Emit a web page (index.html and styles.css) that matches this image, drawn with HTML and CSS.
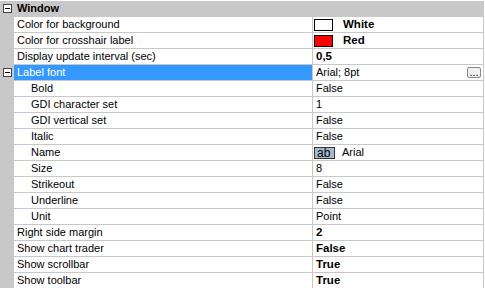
FILE: index.html
```html
<!DOCTYPE html>
<html lang="en">
<head>
    <meta charset="UTF-8">
    <title>Chart Properties</title>
    <link rel="stylesheet" href="styles.css">
</head>
<body>

    <div class="grid">
        <div class="row cat">
            <span class="gut"><i class="tog"></i></span>
            <span class="name">Window</span>
        </div>
        <div class="row">
            <span class="gut"></span>
            <span class="name">Color for background</span>
            <span class="val bold"><i class="swatch white"></i>White</span>
        </div>
        <div class="row">
            <span class="gut"></span>
            <span class="name">Color for crosshair label</span>
            <span class="val bold"><i class="swatch red"></i>Red</span>
        </div>
        <div class="row">
            <span class="gut"></span>
            <span class="name">Display update interval (sec)</span>
            <span class="val bold">0,5</span>
        </div>
        <div class="row">
            <span class="gut"><i class="tog"></i></span>
            <span class="name selected">Label font</span>
            <span class="val">Arial; 8pt<b class="dots">...</b></span>
        </div>
        <div class="row">
            <span class="gut"></span>
            <span class="name sub">Bold</span>
            <span class="val">False</span>
        </div>
        <div class="row">
            <span class="gut"></span>
            <span class="name sub">GDI character set</span>
            <span class="val">1</span>
        </div>
        <div class="row">
            <span class="gut"></span>
            <span class="name sub">GDI vertical set</span>
            <span class="val">False</span>
        </div>
        <div class="row">
            <span class="gut"></span>
            <span class="name sub">Italic</span>
            <span class="val">False</span>
        </div>
        <div class="row">
            <span class="gut"></span>
            <span class="name sub">Name</span>
            <span class="val"><i class="ab">ab</i>Arial</span>
        </div>
        <div class="row">
            <span class="gut"></span>
            <span class="name sub">Size</span>
            <span class="val">8</span>
        </div>
        <div class="row">
            <span class="gut"></span>
            <span class="name sub">Strikeout</span>
            <span class="val">False</span>
        </div>
        <div class="row">
            <span class="gut"></span>
            <span class="name sub">Underline</span>
            <span class="val">False</span>
        </div>
        <div class="row">
            <span class="gut"></span>
            <span class="name sub">Unit</span>
            <span class="val">Point</span>
        </div>
        <div class="row">
            <span class="gut"></span>
            <span class="name">Right side margin</span>
            <span class="val bold">2</span>
        </div>
        <div class="row">
            <span class="gut"></span>
            <span class="name">Show chart trader</span>
            <span class="val bold">False</span>
        </div>
        <div class="row">
            <span class="gut"></span>
            <span class="name">Show scrollbar</span>
            <span class="val bold">True</span>
        </div>
        <div class="row">
            <span class="gut"></span>
            <span class="name">Show toolbar</span>
            <span class="val bold">True</span>
        </div>
    </div>

</body>
</html>
```

FILE: styles.css
```css
body {
    margin: 0;
    padding: 0;
    background-color: #fff;
    font-family: "Liberation Sans", Arial, sans-serif;
    font-size: 11px;
    color: #000;
    overflow: hidden;
}

.grid {
    width: 484px;
    padding-top: 1px;
}

.row {
    display: flex;
    height: 16px;
    line-height: 15px;
}

.gut {
    width: 14px;
    flex: none;
    background-color: #c8c8c8;
    position: relative;
}

/* the little minus box */
.tog {
    position: absolute;
    left: 3px;
    top: 3px;
    width: 7px;
    height: 7px;
    border: 1px solid #444;
    background-color: #fff;
}

.tog::after {
    content: "";
    position: absolute;
    left: 1px;
    top: 3px;
    width: 5px;
    height: 1px;
    background-color: #000;
}

.name {
    width: 295px;
    flex: none;
    padding-left: 3px;
    border-bottom: 1px solid #c8c8c8;
    white-space: nowrap;
}

.name.sub {
    padding-left: 17px;
    width: 281px;
}

.name.selected {
    background-color: #3399ff;
    color: #fff;
}

.val {
    flex: 1;
    position: relative;
    display: flex;
    align-items: center;
    padding-left: 3px;
    border-left: 1px solid #c8c8c8;
    border-right: 1px solid #c8c8c8;
    border-bottom: 1px solid #c8c8c8;
    white-space: nowrap;
}

.bold {
    font-weight: bold;
    font-size: 11.5px;
}

.cat {
    background-color: #c8c8c8;
}

.cat .name {
    font-weight: bold;
    border-bottom: none;
    width: 470px;
}

.swatch {
    width: 17px;
    height: 10px;
    border: 1px solid #000;
    margin-left: -2px;
    margin-right: 10px;
}

.swatch.white {
    background-color: #fff;
}

.swatch.red {
    background-color: #ff0000;
}

.ab {
    font-style: normal;
    font-size: 12px;
    line-height: 10px;
    width: 16px;
    height: 10px;
    padding: 0 1px 0 2px;
    margin-left: -2px;
    margin-right: 7px;
    background-color: #a6bad0;
    border: 1px solid #333;
    color: #000;
}

.dots {
    position: absolute;
    right: 2px;
    top: 2px;
    width: 14px;
    height: 11px;
    line-height: 8px;
    text-align: center;
    font-weight: normal;
    border: 1px solid #888;
    border-radius: 2px;
    background-color: #f0f0f0;
    box-sizing: border-box;
}
```
